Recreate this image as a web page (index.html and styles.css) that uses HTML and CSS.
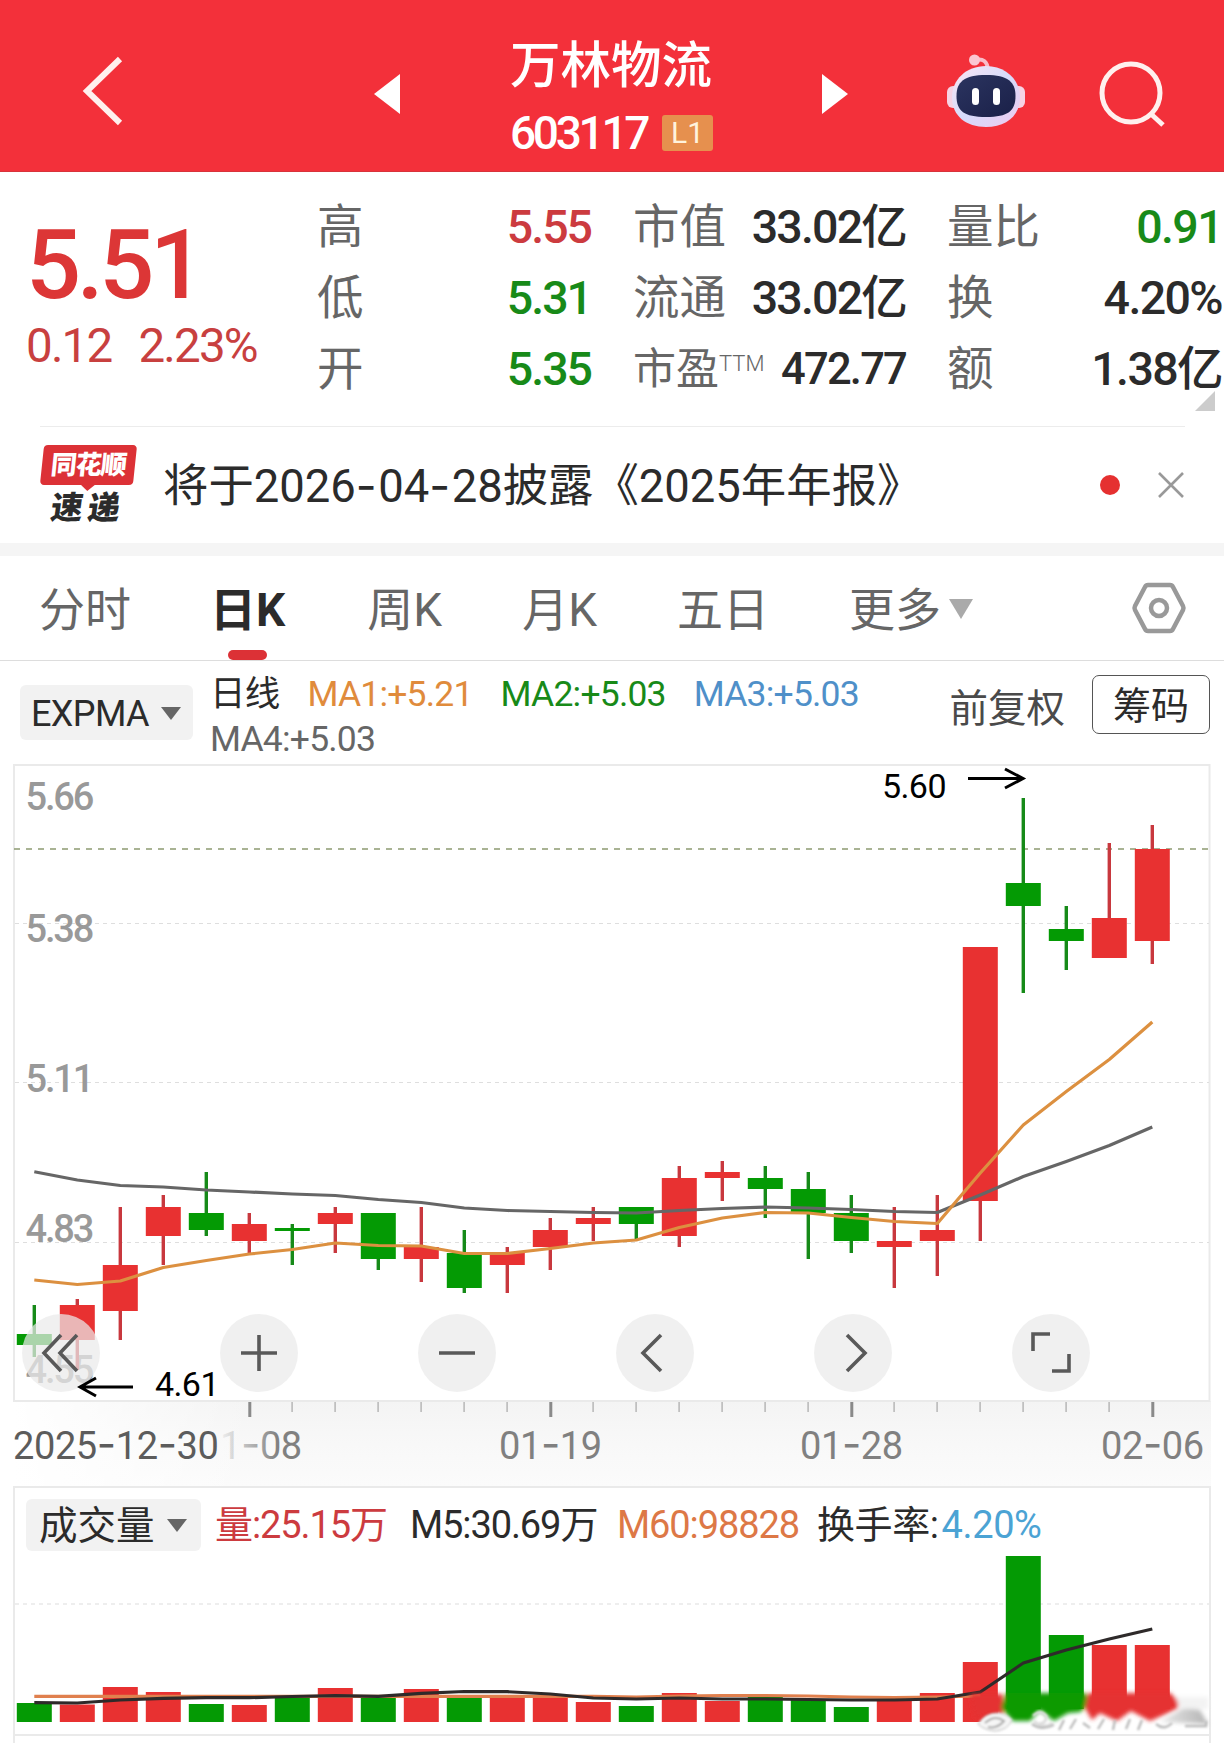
FILE: index.html
```html
<!DOCTYPE html>
<html lang="zh-CN">
<head>
<meta charset="utf-8"/>
<title>万林物流 603117</title>
<link rel="stylesheet" href="styles.css">
</head>
<body>
<header class="topbar">
  <svg class="back" width="46" height="76" viewBox="0 0 46 76"><path d="M42 6 L9 38 L42 70"/></svg>
  <svg class="prev" width="26" height="40" viewBox="0 0 26 40"><path d="M26 0 V40 L0 20 Z"/></svg>
  <div class="stock">
    <div class="stock-name">万林物流</div>
    <div class="stock-code"><span class="code">603117</span><span class="level">L1</span></div>
  </div>
  <svg class="next" width="26" height="40" viewBox="0 0 26 40"><path d="M0 0 V40 L26 20 Z"/></svg>
  <svg class="robot" width="80" height="76" viewBox="0 0 80 76">
    <defs>
      <linearGradient id="shell" x1="0" y1="0" x2="1" y2="1">
        <stop offset="0" stop-color="#fbe6f3"/><stop offset="0.5" stop-color="#d6dbfb"/><stop offset="1" stop-color="#efc9ee"/>
      </linearGradient>
      <linearGradient id="face" x1="0" y1="0" x2="1" y2="1">
        <stop offset="0" stop-color="#2b3460"/><stop offset="1" stop-color="#1a2048"/>
      </linearGradient>
    </defs>
    <path d="M29 7 Q41 4 42 17" fill="none" stroke="#f9bcc8" stroke-width="4"/>
    <circle cx="28.5" cy="7" r="5.5" fill="#fbc6d2"/>
    <rect x="1" y="33" width="14" height="22" rx="6" fill="#f6d3e4"/>
    <rect x="65" y="33" width="14" height="22" rx="6" fill="#f6d3e4"/>
    <path d="M40 13 C60 13 74 27 74 44 C74 63 60 74 40 74 C20 74 6 63 6 44 C6 27 20 13 40 13 Z" fill="url(#shell)"/>
    <path d="M40 22 C62 22 69.5 29 69.5 43 C69.5 58 62 64 40 64 C18 64 10.5 58 10.5 43 C10.5 29 18 22 40 22 Z" fill="url(#face)"/>
    <rect x="26" y="35" width="7" height="17" rx="3.5" fill="#fff"/>
    <rect x="47" y="35" width="7" height="17" rx="3.5" fill="#fff"/>
  </svg>
  <svg class="search" width="70" height="70" viewBox="0 0 70 70"><circle cx="33" cy="32" r="29"/><path d="M53 53 L65 64"/></svg>
</header>

<section class="quote">
  <div class="price-box">
    <div class="price">5.51</div>
    <div class="change"><span>0.12</span><span>2.23%</span></div>
  </div>
  <dl class="stats stats-a">
    <dt>高</dt><dd class="red">5.55</dd>
    <dt>低</dt><dd class="green">5.31</dd>
    <dt>开</dt><dd class="green">5.35</dd>
  </dl>
  <dl class="stats stats-b">
    <dt>市值</dt><dd>33.02亿</dd>
    <dt>流通</dt><dd>33.02亿</dd>
    <dt class="pe">市盈<sup>TTM</sup></dt><dd class="pe-value">472.77</dd>
  </dl>
  <dl class="stats stats-c">
    <dt>量比</dt><dd class="green">0.91</dd>
    <dt>换</dt><dd>4.20%</dd>
    <dt>额</dt><dd>1.38亿</dd>
  </dl>
  <span class="corner"></span>
</section>

<section class="notice">
  <div class="brand">
    <div class="brand-tag"><span>同花顺</span></div>
    <div class="brand-sub">速递</div>
  </div>
  <div class="notice-text">将于2026<i>-</i>04<i>-</i>28披露《2025年年报》</div>
  <span class="dot"></span>
  <svg class="close" width="28" height="28" viewBox="0 0 28 28"><path d="M2 2 L26 26 M26 2 L2 26"/></svg>
</section>

<nav class="tabs">
  <span class="tab">分时</span>
  <span class="tab active">日K</span>
  <span class="tab">周K</span>
  <span class="tab">月K</span>
  <span class="tab">五日</span>
  <span class="tab more">更多</span>
  <svg class="settings" width="56" height="54" viewBox="0 0 56 54">
    <path d="M17 4 H39 Q41 4 42 6 L52 25 Q53 27 52 29 L42 48 Q41 50 39 50 H17 Q15 50 14 48 L4 29 Q3 27 4 25 L14 6 Q15 4 17 4 Z"/>
    <circle cx="28" cy="27" r="8"/>
  </svg>
</nav>

<section class="indicator">
  <div class="select">EXPMA</div>
  <div class="ma">
    <div class="ma-row"><span class="ma-name">日线</span><span class="orange">MA1:+5.21</span><span class="green">MA2:+5.03</span><span class="blue">MA3:+5.03</span></div>
    <div class="ma-row gray">MA4:+5.03</div>
  </div>
  <span class="adjust">前复权</span>
  <span class="chips">筹码</span>
</section>

<section class="kline">
  <svg id="kline" width="1224" height="725" viewBox="0 761 1224 725">
    <defs>
      <linearGradient id="strip" x1="0" y1="0" x2="0" y2="1">
        <stop offset="0" stop-color="#f4f4f4"/><stop offset="0.5" stop-color="#f8f8f8"/><stop offset="1" stop-color="#fbfbfb"/>
      </linearGradient>
      <linearGradient id="fade" gradientUnits="userSpaceOnUse" x1="222" y1="0" x2="278" y2="0">
        <stop offset="0" stop-color="#808080" stop-opacity="0.1"/><stop offset="1" stop-color="#808080"/>
      </linearGradient>
      <linearGradient id="stripLeft" x1="0" y1="0" x2="1" y2="0">
        <stop offset="0" stop-color="#fff"/><stop offset="1" stop-color="#fff" stop-opacity="0"/>
      </linearGradient>
    </defs>
    <rect x="14" y="1401" width="1197" height="85" fill="url(#strip)"/>
    <rect x="14" y="1401" width="240" height="85" fill="url(#stripLeft)"/>
    <rect class="frame" x="14" y="765" width="1195.5" height="636"/>
    <path class="grid" d="M15 923.5 H1209 M15 1082.5 H1209 M15 1242.5 H1209"/>
    <path class="last" d="M14 849 H1209"/>
    <g class="scale">
      <text x="25.5" y="810">5.66</text>
      <text x="25.5" y="942">5.38</text>
      <text x="25.5" y="1092">5.11</text>
      <text x="25.5" y="1242">4.83</text>
      <text x="25.5" y="1383">4.55</text>
    </g>
    <g id="candles"></g>
    <path id="maGray" class="line-gray"/>
    <path id="maOrange" class="line-orange"/>
    <g class="mark">
      <text x="882" y="798">5.60</text>
      <path d="M968 778.5 H1022 M1005 769 L1023 778.5 L1005 788"/>
      <text x="155" y="1396">4.61</text>
    </g>
    <g id="ticks"></g>
    <g class="dates">
      <text class="first" x="13" y="1459">2025<tspan class="dash">-</tspan>12<tspan class="dash">-</tspan>30</text>
      <text x="220" y="1459" fill="url(#fade)">1<tspan class="dash">-</tspan>08</text>
      <text x="499" y="1459">01<tspan class="dash">-</tspan>19</text>
      <text x="800" y="1459">01<tspan class="dash">-</tspan>28</text>
      <text x="1101" y="1459">02<tspan class="dash">-</tspan>06</text>
    </g>
  </svg>
  <div class="controls">
    <svg viewBox="0 0 78 78"><path d="M39 21 L22 39 L39 57 M55 21 L38 39 L55 57"/></svg>
    <svg viewBox="0 0 78 78"><path d="M39 21 V57 M21 39 H57"/></svg>
    <svg viewBox="0 0 78 78"><path d="M21 39 H57"/></svg>
    <svg viewBox="0 0 78 78"><path d="M45 21 L27 39 L45 57"/></svg>
    <svg viewBox="0 0 78 78"><path d="M33 21 L51 39 L33 57"/></svg>
    <svg viewBox="0 0 78 78"><path d="M38 20 H21 V37 M40 57 H57 V40"/></svg>
  </div>
  <svg class="low-arrow" width="60" height="24" viewBox="0 0 60 24"><path d="M3 12 H56 M19 3 L3 12 L19 21"/></svg>
</section>

<section class="volume">
  <div class="vol-head">
    <div class="select">成交量</div>
    <span class="vol red">量:25.15万</span>
    <span class="vol m5">M5:30.69万</span>
    <span class="vol m60">M60:98828</span>
    <span class="vol turnover">换手率:<em>4.20%</em></span>
  </div>
  <svg id="volume" width="1194" height="174" viewBox="15 1561 1194 174">
    <defs>
      <filter id="soft" x="-10%" y="-20%" width="120%" height="140%"><feGaussianBlur stdDeviation="2"/></filter>
      <filter id="faint" x="-5%" y="-30%" width="110%" height="160%"><feGaussianBlur stdDeviation="0.9"/></filter>
      <linearGradient id="smoke" x1="0" y1="0" x2="1" y2="0">
        <stop offset="0" stop-color="#e8e8e8"/><stop offset="1" stop-color="#b4b4b4"/>
      </linearGradient>
    </defs>
    <path class="grid" d="M15 1604 H1209"/>
    <g id="bars"></g>
    <path id="volM60" class="line-m60"/>
    <path id="volM5" class="line-m5"/>
    <g id="stamp">
      <path d="M1000 1709 H1209 V1732 H1000 Z" fill="#fff"/>
      <g filter="url(#soft)">
        <path d="M1160 1722 L1184 1708 L1200 1710 L1208 1724 Z" fill="url(#smoke)"/>
        <path d="M1168 1697 H1208 V1709 H1182 Z" fill="#f3f3f3"/>
        <path d="M970 1694 H1003 V1714 L990 1714 L975 1719 Z" fill="#e53030"/>
        <path d="M1006 1693 H1086 Q1090 1706 1080 1712 L1068 1713 L1054 1721 L1040 1710 L1030 1721 L1013 1721 L1001 1708 Z" fill="#0a9a05"/>
        <path d="M1088 1693 H1170 Q1180 1700 1178 1708 L1166 1714 L1150 1721 L1131 1711 L1117 1721 L1100 1713 L1092 1720 L1085 1708 Z" fill="#e53030"/>
      </g>
      <g filter="url(#faint)">
        <path d="M978 1724 Q985 1713 997 1713 Q1007 1714 1012 1720 Q1008 1730 995 1731 Q984 1730 978 1724 Z" fill="#f6f6f6" stroke="#bdbdbd"/>
        <path d="M985 1723 Q995 1714 1004 1721 Q997 1729 988 1727" fill="none" stroke="#aaa" stroke-width="2"/>
        <path d="M1033 1716 Q1040 1709 1046 1716 Q1047 1724 1037 1724 M1034 1721 Q1043 1730 1053 1723" fill="none" stroke="#ddd" stroke-width="3"/>
        <path d="M1032 1724 Q1041 1731 1054 1725 M1059 1730 L1064 1720 M1070 1729 L1076 1719 M1083 1723 L1090 1728 M1098 1729 L1104 1719 M1113 1730 L1115 1720 M1126 1729 L1130 1719 M1138 1730 L1142 1720 M1156 1724 Q1164 1731 1172 1723 M1185 1726 H1206 V1721" fill="none" stroke="#bbb" stroke-width="2.4"/>
      </g>
    </g>
  </svg>
</section>
<div class="next-panel"></div>
<script src="script.js"></script>
</body>
</html>
```

FILE: styles.css
```css
* {
  box-sizing: border-box;
}
body {
  margin: 0;
  width: 1224px;
  height: 1743px;
  overflow: hidden;
  background: #fff;
  color: #2b2b2b;
  font-family: Roboto, "Noto Sans CJK SC", sans-serif;
}
svg {
  display: block;
  flex: none;
}
.red {
  color: #cc3b3f;
}
.green {
  color: #188a18;
}
.orange {
  color: #e08b3c;
}
.blue {
  color: #4f90c9;
}
.gray {
  color: #666;
}

/* top bar */
.topbar {
  display: flex;
  align-items: flex-start;
  height: 172px;
  background: #f3303a;
  border-bottom: 1px solid #d8333b;
}
.back {
  margin: 53px 0 0 78px;
  fill: none;
  stroke: #fff0ee;
  stroke-width: 6;
}
.prev,
.next {
  margin-top: 74px;
  fill: #fff;
}
.prev {
  margin-left: 250px;
}
.stock {
  width: 203px;
  margin-left: 110px;
  color: #fff;
}
.stock-name {
  margin-top: 38px;
  font-size: 50.5px;
  font-weight: 500;
  line-height: 56px;
  white-space: nowrap;
}
.stock-code {
  display: flex;
  align-items: center;
  justify-content: space-between;
  margin-top: 17px;
  height: 44px;
}
.code {
  font-size: 46px;
  font-weight: 500;
  letter-spacing: -3.3px;
}
.level {
  width: 51px;
  height: 36px;
  border-radius: 3px;
  background: #e6904e;
  color: #fff3dc;
  font-size: 30px;
  font-weight: 400;
  line-height: 36px;
  text-align: center;
}
.next {
  margin-left: 109px;
}
.robot {
  margin: 53px 0 0 98px;
}
.search {
  margin: 61px 0 0 72px;
  fill: none;
  stroke: #fff0ee;
  stroke-width: 5;
}

/* quote */
.quote {
  position: relative;
  display: flex;
  height: 254px;
}
.price-box {
  width: 317px;
  padding-left: 26px;
  color: #dc3636;
}
.price {
  margin-top: 38px;
  font-size: 97px;
  font-weight: 500;
  line-height: 110px;
  letter-spacing: -4.4px;
}
.change {
  display: flex;
  gap: 27px;
  margin-top: -2px;
  color: #c8403f;
  font-size: 47.5px;
  line-height: 56px;
  letter-spacing: -1.8px;
}
.stats {
  display: grid;
  grid-template-columns: auto minmax(0, 1fr);
  grid-auto-rows: 71px;
  margin: 20px 0 0;
  font-size: 46.5px;
  line-height: 71px;
  white-space: nowrap;
}
.stats dt {
  color: #666;
}
.stats dd {
  justify-self: end;
  margin: 0;
  font-weight: 500;
  letter-spacing: -2px;
}
.stats-a {
  width: 274px;
}
.stats-b {
  width: 273px;
  margin-left: 42px;
}
.stats-b dd {
  letter-spacing: -1.8px;
}
.stats-c {
  width: 275px;
  margin-left: 41px;
}
.stats-c dd {
  letter-spacing: -1.6px;
}
.stats .pe {
  font-size: 43px;
}
.stats .pe-value {
  font-size: 43.5px;
}
.pe sup {
  font-size: 22px;
  font-weight: 300;
  line-height: 0;
  vertical-align: 13px;
}
.corner {
  position: absolute;
  right: 9px;
  bottom: 15px;
  border-left: 20px solid transparent;
  border-bottom: 20px solid #ccc;
}

/* notice */
.notice {
  display: flex;
  align-items: center;
  height: 117px;
  margin: 0 39px 0 40px;
  border-top: 1px solid #ececec;
}
.brand {
  width: 95px;
}
.brand-tag {
  position: relative;
  height: 40px;
  margin-left: 2px;
  border-radius: 4px;
  background: #dc3136;
  transform: skewX(-6deg);
  color: #fff;
  font-size: 26px;
  font-weight: 900;
  line-height: 40px;
  text-align: center;
  letter-spacing: -1px;
}
.brand-tag::after {
  content: "";
  position: absolute;
  left: 40px;
  top: 39px;
  border: 8px solid transparent;
  border-top: 7px solid #dc3136;
  border-bottom: 0;
}
.brand-sub {
  margin: 5px 0 0 11px;
  font-size: 32px;
  font-weight: 900;
  line-height: 36px;
  letter-spacing: 5px;
  transform: skewX(-8deg);
}
.notice-text {
  flex: 1;
  margin: -6px 0 0 28px;
  font-size: 45.4px;
  white-space: nowrap;
}
.notice-text i,
.dash {
  font-family: Inter, sans-serif;
  font-style: normal;
}
.notice-text i {
  letter-spacing: 1.5px;
}
.dot {
  width: 20px;
  height: 20px;
  border-radius: 50%;
  background: #e53030;
}
.close {
  margin-left: 37px;
  fill: none;
  stroke: #999;
  stroke-width: 2.6;
}

/* tabs */
.tabs {
  display: flex;
  align-items: center;
  height: 118px;
  padding: 0 37px 0 39px;
  border-top: 13px solid #f5f5f5;
  border-bottom: 1px solid #ddd;
  color: #666;
  font-size: 46px;
  line-height: 108px;
  white-space: nowrap;
}
.tab {
  height: 104px;
  margin-right: 80px;
}
.tab.active {
  position: relative;
  margin: 0 82px 0 -1px;
  color: #2b2b2b;
  font-weight: 700;
}
.tab.active::after {
  content: "";
  position: absolute;
  left: 18px;
  bottom: 0;
  width: 39px;
  height: 10px;
  border-radius: 5px;
  background: #dc3136;
}
.tab.more {
  flex: 1;
  margin-right: 0;
}
.tab.more::after {
  content: "";
  display: inline-block;
  margin-left: 8px;
  vertical-align: 7px;
  border: 12px solid transparent;
  border-top: 20px solid #aaa;
  border-bottom: 0;
}
.settings {
  fill: none;
  stroke: #999;
  stroke-width: 4.5;
}

/* indicator */
.indicator {
  display: flex;
  height: 100px;
}
.select {
  display: flex;
  align-items: center;
  justify-content: space-between;
  width: 173px;
  height: 55px;
  padding: 2px 12px 0 11px;
  border-radius: 6px;
  background: #f2f2f2;
  font-size: 36px;
  letter-spacing: -0.6px;
}
.select::after {
  content: "";
  border: 10px solid transparent;
  border-top: 13px solid #666;
  border-bottom: 0;
}
.indicator .select {
  margin: 24px 0 0 20px;
}
.ma {
  flex: 1;
  margin: 11px 0 0 17px;
  font-size: 35.5px;
  line-height: 45px;
  letter-spacing: -0.8px;
}
.ma-row {
  display: flex;
  gap: 28px;
  white-space: nowrap;
}
.ma-name {
  letter-spacing: -0.8px;
}
.adjust {
  margin: 21px 27px 0 0;
  color: #4a4a4a;
  font-size: 38.5px;
  line-height: 54px;
}
.chips {
  width: 118px;
  height: 59px;
  margin: 14px 14px 0 0;
  border: 1.5px solid #555;
  border-radius: 7px;
  font-size: 38px;
  line-height: 60px;
  text-align: center;
}

/* k line chart */
.kline {
  position: relative;
  height: 725px;
}
.frame {
  fill: none;
  stroke: #eaeaea;
  stroke-width: 2;
}
.grid {
  fill: none;
  stroke: #dedede;
  stroke-width: 1.2;
  stroke-dasharray: 4 4;
}
.last {
  fill: none;
  stroke: #8d9a72;
  stroke-width: 1.6;
  stroke-dasharray: 6 6;
}
.scale text {
  fill: #999;
  font-size: 38px;
  font-weight: 500;
  letter-spacing: -2.2px;
}
.up {
  fill: #e83131;
}
.down {
  fill: #049a04;
}
.wick-up {
  fill: #c8383e;
}
.wick-down {
  fill: #168a18;
}
.line-gray,
.line-orange,
.line-m5,
.line-m60 {
  fill: none;
  stroke-width: 3.2;
  stroke-linejoin: round;
}
.line-gray {
  stroke: #666;
}
.line-orange {
  stroke: #dc9040;
}
.line-m5 {
  stroke: #2e2a2a;
}
.line-m60 {
  stroke: #e0804e;
}
.mark text {
  fill: #000;
  font-size: 34px;
  letter-spacing: -0.6px;
}
.mark path,
.low-arrow {
  fill: none;
  stroke: #000;
  stroke-width: 3;
}
.tick {
  fill: #bbb;
}
.tick-major {
  fill: #8a8a8a;
}
.dates text {
  font-size: 38px;
  letter-spacing: -0.4px;
}
.dates .dash {
  font-size: 42px;
}
.dates text:not([fill]) {
  fill: #808080;
}
.dates .first:not([fill]) {
  fill: #5c5c5c;
}
.controls {
  position: absolute;
  left: 22px;
  top: 553px;
  display: flex;
  gap: 120px;
}
.controls svg {
  width: 78px;
  height: 78px;
  border-radius: 50%;
  background: rgba(234, 234, 234, 0.72);
  fill: none;
  stroke: #595959;
  stroke-width: 3.6;
}
.low-arrow {
  position: absolute;
  left: 77px;
  top: 614px;
}

/* volume */
.volume {
  height: 250px;
  margin: 0 13px;
  border: 2px solid #eaeaea;
}
#volume {
  overflow: visible;
}
.vol-head {
  display: flex;
  height: 73px;
  padding: 11px 0 0 11px;
  font-size: 38px;
  line-height: 53px;
  white-space: nowrap;
}
.vol-head .select {
  width: 175px;
  height: 52px;
  font-size: 38.5px;
  letter-spacing: 0;
  padding: 0 14px 0 13px;
}
.vol {
  letter-spacing: -1.1px;
}
.vol.red {
  width: 195px;
  margin-left: 14px;
}
.m5 {
  width: 207px;
}
.m60 {
  width: 200px;
  color: #dd7846;
}
.turnover {
  letter-spacing: -0.4px;
}
.turnover em {
  margin-left: 3px;
  color: #4ba3d4;
  font-style: normal;
}
.next-panel {
  height: 7px;
  margin: 0 13px;
  border: solid #eaeaea;
  border-width: 0 2px;
}
```

FILE: script.js
```js
// [wick top, wick bottom, body top, body bottom, 1 = up / 0 = down]
const candles = [
  [1305, 1357, 1334, 1345, 0], [1299, 1370, 1305, 1340, 1], [1207, 1340, 1265, 1311, 1],
  [1195, 1265, 1207, 1236, 1], [1172, 1236, 1213, 1230, 0], [1213, 1253, 1224, 1241, 1],
  [1224, 1265, 1228, 1231, 0], [1207, 1253, 1213, 1224, 1], [1213, 1270, 1213, 1259, 0],
  [1207, 1282, 1247, 1259, 1], [1230, 1293, 1253, 1288, 0], [1247, 1293, 1253, 1265, 1],
  [1218, 1270, 1230, 1247, 1], [1207, 1241, 1218, 1224, 1], [1207, 1239, 1207, 1224, 0],
  [1166, 1247, 1178, 1236, 1], [1161, 1201, 1172, 1178, 1], [1166, 1218, 1178, 1189, 0],
  [1172, 1259, 1189, 1213, 0], [1195, 1253, 1213, 1241, 0], [1207, 1288, 1241, 1247, 1],
  [1195, 1276, 1230, 1241, 1], [947, 1241, 947, 1201, 1], [798, 993, 883, 906, 0],
  [906, 970, 929, 941, 0], [843, 958, 918, 958, 1], [825, 964, 849, 941, 1]
];
const grayLine = [1171.7, 1180, 1185.5, 1187, 1190, 1192, 1194, 1195.5, 1199.5, 1202.5, 1208, 1210.5, 1211.5, 1212.5,
  1213, 1210.5, 1208.5, 1207, 1208, 1209.5, 1211.5, 1212.5, 1195, 1176.5, 1161.5, 1145.5, 1127];
const orangeLine = [1280, 1284.5, 1281, 1267.5, 1260.5, 1254, 1249.5, 1243, 1245.5, 1246, 1253.5, 1253.5, 1248.5, 1243,
  1240, 1227.5, 1218, 1212.5, 1213, 1217.5, 1221.5, 1223.5, 1173, 1125, 1091.5, 1059.5, 1022];
const volTop = [1703, 1704.5, 1687, 1692, 1704, 1705, 1697, 1688, 1697, 1689, 1697, 1697, 1697, 1702,
  1706, 1693, 1701, 1697, 1700, 1707, 1700, 1693, 1662, 1556, 1635, 1645, 1645];
const volM5 = [1702.7, 1703, 1700, 1698.3, 1697.7, 1697.7, 1696.5, 1695.7, 1696.3, 1693.3, 1691.5, 1691.7, 1694, 1698,
  1699, 1698, 1699, 1699, 1699.5, 1700, 1700, 1699, 1692, 1663, 1650, 1639, 1629];
const volM60 = [1696.3, 1696.3, 1696.3, 1696.3, 1696.3, 1696.3, 1696.3, 1696.3, 1696.3, 1696.3, 1696.3, 1696.3, 1696.3, 1696.3,
  1697, 1696, 1695.5, 1695.5, 1696, 1697, 1697.5, 1697, 1696];

const x = i => 34.3 + i * 43;
const rect = (cls, left, top, w, h) =>
  `<rect class="${cls}" x="${left.toFixed(1)}" y="${top}" width="${w}" height="${h}"/>`;
const line = values => values.map((v, i) => `${i ? "L" : "M"}${x(i).toFixed(1)} ${v}`).join(" ");

document.getElementById("candles").innerHTML = candles.map(([high, low, top, bottom, up], i) =>
  rect(up ? "wick-up" : "wick-down", x(i) - 1.7, high, 3.4, low - high) +
  rect(up ? "up" : "down", x(i) - 17.5, top, 35, bottom - top)
).join("");

document.getElementById("bars").innerHTML = volTop.map((top, i) =>
  rect(candles[i][4] ? "up" : "down", x(i) - 17.5, top, 35, 1722 - top)
).join("");

// one tick a day, a longer one where a date stands
let ticks = "";
for (let i = 5; i < candles.length; i++) {
  const major = (i - 5) % 7 === 0;
  ticks += rect(major ? "tick-major" : "tick", x(i) - 1, 1402, major ? 3 : 1.6, major ? 15 : 10);
}
document.getElementById("ticks").innerHTML = ticks;

document.getElementById("maGray").setAttribute("d", line(grayLine));
document.getElementById("maOrange").setAttribute("d", line(orangeLine));
document.getElementById("volM5").setAttribute("d", line(volM5));
document.getElementById("volM60").setAttribute("d", line(volM60));
```
